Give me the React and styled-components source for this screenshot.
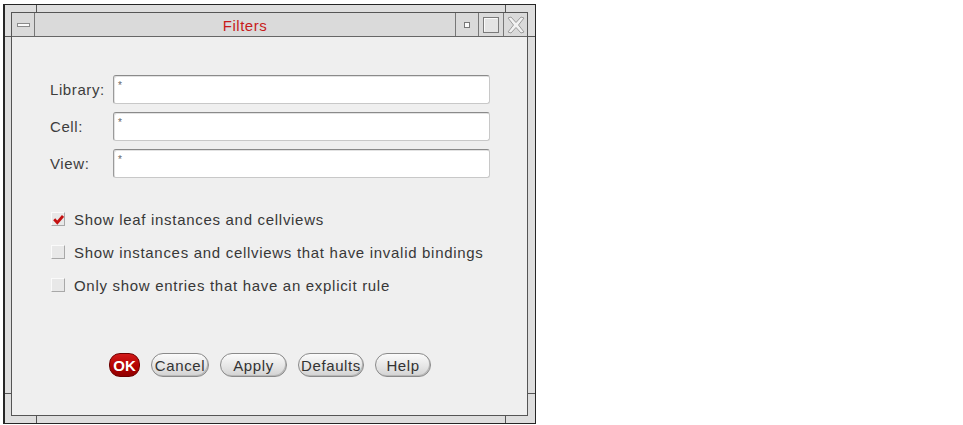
import React from 'react';
import styled, { createGlobalStyle } from 'styled-components';

const GlobalStyle = createGlobalStyle`
  html, body {
    margin: 0;
    padding: 0;
    background: #ffffff;
  }
  body {
    font-family: "Liberation Sans", Arial, sans-serif;
  }
`;

const Page = styled.div`
  width: 963px;
  height: 425px;
  overflow: hidden;
  background: #ffffff;
`;

const Frame = styled.div`
  position: relative;
  margin: 4px 0 0 3px;
  width: 533px;
  height: 420px;
  box-sizing: border-box;
  border: 1px solid #262626;
  border-left-width: 2px;
  padding: 7px 7px 7px 6px;
  background: #dedede;
`;

const Tick = styled.span`
  position: absolute;
  background: #555;
  ${p => (p.$vertical ? 'width: 1px; height: 7px;' : 'width: 7px; height: 1px;')}
`;

const Window = styled.div`
  height: 100%;
  box-sizing: border-box;
  border: 1px solid #555;
  display: flex;
  flex-direction: column;
`;

const TitleBar = styled.div`
  height: 23px;
  display: flex;
  background: #dadada;
  border-bottom: 1px solid #666;
`;

const TitleButton = styled.div`
  width: ${p => p.$w}px;
  display: flex;
  align-items: center;
  justify-content: center;
  box-sizing: border-box;
  ${p => (p.$left ? 'border-right: 1px solid #777;' : 'border-left: 1px solid #777;')}
`;

const Title = styled.div`
  flex: 1;
  display: flex;
  align-items: center;
  justify-content: center;
  color: #c81a1a;
  font-size: 15px;
  letter-spacing: 0.5px;
  padding-top: 1px;
`;

const Content = styled.div`
  flex: 1;
  background: #efefef;
  padding: 38px 0 0 38px;
  display: flex;
  flex-direction: column;
`;

const Form = styled.div`
  display: grid;
  grid-template-columns: 63px 377px;
  row-gap: 8px;
  align-items: center;
`;

const Label = styled.label`
  font-size: 15px;
  letter-spacing: 0.6px;
  color: #3d3d3d;
`;

const Input = styled.div`
  height: 29px;
  box-sizing: border-box;
  background: #ffffff;
  border: 1px solid #c8c8c8;
  border-top-color: #8a8a8a;
  border-left-color: #9a9a9a;
  border-radius: 3px;
  padding: 4px 0 0 4px;
  font-size: 10px;
  color: #666;
  box-shadow: inset 1px 1px 0 #e2e2e2;
`;

const Checks = styled.div`
  margin-top: 31px;
  display: flex;
  flex-direction: column;
  gap: 13px;
`;

const CheckRow = styled.div`
  height: 20px;
  display: flex;
  align-items: center;
  gap: 9px;
  padding-left: 1px;
  font-size: 15px;
  color: #383838;
  letter-spacing: 0.7px;
`;

const Box = styled.span`
  width: 14px;
  height: 14px;
  flex: none;
  box-sizing: border-box;
  background: #e8e8e8;
  border: 1px solid #fafafa;
  border-right-color: #a8a8a8;
  border-bottom-color: #a8a8a8;
  display: flex;
  align-items: center;
  justify-content: center;
`;

const Buttons = styled.div`
  margin-top: 58px;
  padding-left: 59px;
  display: flex;
  align-items: center;
  gap: 11px;
`;

const Button = styled.button`
  width: ${p => p.$w}px;
  height: 24px;
  padding: 0;
  box-sizing: border-box;
  border: 1px solid #8a8a8a;
  border-radius: 12px;
  background: linear-gradient(#fbfbfb, #e4e4e4 60%, #d2d2d2);
  box-shadow: inset -1px -1px 0 #b8b8b8;
  font-family: "Liberation Sans", Arial, sans-serif;
  font-size: 15px;
  letter-spacing: 0.6px;
  color: #333;
`;

const OkButton = styled(Button)`
  border-color: #6e0000;
  border-radius: 11px;
  background: linear-gradient(#d21a1a, #b00000 60%, #900000);
  box-shadow: none;
  color: #ffffff;
  font-weight: bold;
  font-size: 15px;
  letter-spacing: 0;
`;

const CheckMark = () => (
  <svg width="11" height="11" viewBox="0 0 11 11">
    <path d="M1.2 5.2 L4.3 8.6 L10 2" fill="none" stroke="#c41010" strokeWidth="2.8" />
  </svg>
);

const Close = () => (
  <svg width="20" height="20" viewBox="0 0 20 20">
    <path
      d="M2 3 L5 2 L10 7.5 L15 2 L18 3 L12.5 10 L18 17 L15 18 L10 12.5 L5 18 L2 17 L7.5 10 Z"
      fill="#f2f2f2"
      stroke="#9c9c9c"
      strokeWidth="1"
    />
  </svg>
);

const checks = [
  { text: 'Show leaf instances and cellviews', on: true },
  { text: 'Show instances and cellviews that have invalid bindings', on: false },
  { text: 'Only show entries that have an explicit rule', on: false },
];

const fields = ['Library:', 'Cell:', 'View:'];

const buttons = [
  { text: 'Cancel', w: 58 },
  { text: 'Apply', w: 67 },
  { text: 'Defaults', w: 66 },
  { text: 'Help', w: 56 },
];

export default function App() {
  return (
    <Page>
      <GlobalStyle />
      <Frame>
        <Tick $vertical style={{ top: 0, left: 31 }} />
        <Tick $vertical style={{ top: 0, left: 500 }} />
        <Tick $vertical style={{ bottom: 0, left: 31 }} />
        <Tick $vertical style={{ bottom: 0, left: 500 }} />
        <Tick style={{ left: 0, top: 31 }} />
        <Tick style={{ left: 0, top: 388 }} />
        <Tick style={{ right: 0, top: 31 }} />
        <Tick style={{ right: 0, top: 388 }} />
        <Window>
          <TitleBar>
            <TitleButton $left $w={23}>
              <svg width="13" height="4" viewBox="0 0 13 4">
                <rect x="0.5" y="0.5" width="12" height="3" fill="#fafafa" stroke="#8a8a8a" />
              </svg>
            </TitleButton>
            <Title>Filters</Title>
            <TitleButton $w={23}>
              <svg width="6" height="6" viewBox="0 0 6 6">
                <rect x="0.5" y="0.5" width="5" height="5" fill="#fafafa" stroke="#777" />
              </svg>
            </TitleButton>
            <TitleButton $w={25}>
              <svg width="16" height="16" viewBox="0 0 16 16">
                <rect x="0.5" y="0.5" width="15" height="15" fill="#e4e4e4" stroke="#7a7a7a" />
                <path d="M1.5 14.5 V1.5 H14.5" fill="none" stroke="#fafafa" />
              </svg>
            </TitleButton>
            <TitleButton $w={24}>
              <Close />
            </TitleButton>
          </TitleBar>
          <Content>
            <Form>
              {fields.map(f => (
                <React.Fragment key={f}>
                  <Label>{f}</Label>
                  <Input>*</Input>
                </React.Fragment>
              ))}
            </Form>
            <Checks>
              {checks.map(c => (
                <CheckRow key={c.text}>
                  <Box>{c.on && <CheckMark />}</Box>
                  {c.text}
                </CheckRow>
              ))}
            </Checks>
            <Buttons>
              <OkButton $w={31}>OK</OkButton>
              {buttons.map(b => (
                <Button key={b.text} $w={b.w}>{b.text}</Button>
              ))}
            </Buttons>
          </Content>
        </Window>
      </Frame>
    </Page>
  );
}
